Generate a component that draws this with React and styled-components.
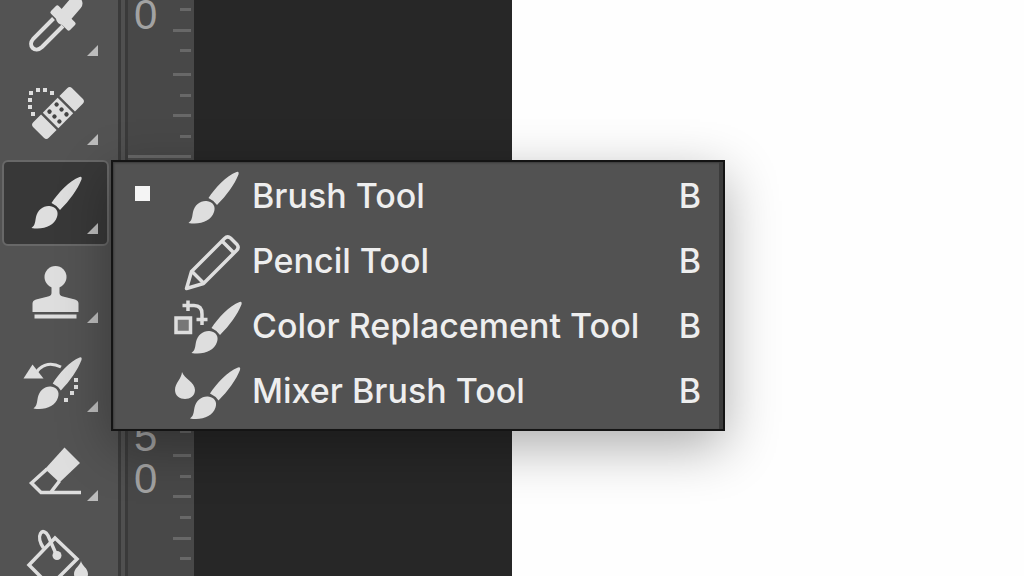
import React, {useState} from 'react';
import styled, {createGlobalStyle} from 'styled-components';

const GlobalStyle = createGlobalStyle`
    * {
        box-sizing: border-box;
    }
    body {
        margin: 0;
        background: #262626;
        font-family: Inter, "Liberation Sans", sans-serif;
    }
`;
const Workspace = styled.div`
    display: flex;
    height: 100vh;
    overflow: hidden;
`;
const Toolbar = styled.nav`
    flex: 0 0 118px;
    padding-left: 2px;
    background: #535353;
`;
/* the column is scrolled a little, so its first tool is cut by the window */
const ToolList = styled.div`
    display: flex;
    flex-direction: column;
    gap: 3px;
    margin-top: -18px;
`;
const ToolSlot = styled.div`
    position: relative;
    width: 107px;
`;
const ToolButton = styled.button`
    display: flex;
    align-items: center;
    justify-content: center;
    position: relative;
    width: 100%;
    height: 86px;
    padding: 0;
    border: 2px solid ${({$active}) => ($active ? '#686868' : 'transparent')};
    border-radius: 6px;
    background: ${({$active}) => ($active ? '#383838' : 'transparent')};
    color: #dedede;
    &::after {
        content: "";
        position: absolute;
        right: 9px;
        bottom: 10px;
        width: 11px;
        height: 11px;
        background: #bcbcbc;
        clip-path: polygon(100% 0, 100% 100%, 0 100%);
    }
`;
const ToolSvg = styled.svg`
    display: block;
    flex: none;
    width: 71px;
    height: 70px;
`;
const Divider = styled.div`
    flex: 0 0 10px;
    background: #505050;
    border-left: 3px solid #3a3a3a;
    border-right: 3px solid #3a3a3a;
`;
const Ruler = styled.div`
    flex: 0 0 66px;
    padding-right: 3px;
    background: #484848;
`;
const RulerTrack = styled.div`
    margin-top: -99px;
`;
const RulerSegment = styled.div`
    display: flex;
    justify-content: space-between;
    height: 254px;
    border-top: 3px solid #686868;
`;
const RulerLabel = styled.div`
    display: grid;
    grid-auto-rows: 42px;
    align-content: start;
    padding: ${({$skip}) => 4 + $skip * 43}px 0 0 6px;
    color: #a2a2a2;
    font-family: "Liberation Sans", Arial, sans-serif;
    font-size: 42px;
    line-height: 42px;
`;
const Digit = styled.div``;
const RulerTicks = styled.svg`
    display: block;
    width: 19px;
    height: 251px;
`;
const Pasteboard = styled.div`
    flex: 318 1 0;
    background: #272727;
`;
const Document = styled.main`
    flex: 512 1 0;
    background: #fefefe;
`;
const Flyout = styled.div`
    position: absolute;
    z-index: 2;
    top: 0;
    left: 109px;
    min-width: 614px;
    padding: 1px 0 6px;
    border: 2px solid #141414;
    background: #525252;
    box-shadow: inset -4px 0 0 #3b3b3b, inset 1px 1px 2px #3b3b3b,
        0 16px 50px rgb(0 0 0 / 32%);
`;
const FlyoutItem = styled.button`
    display: grid;
    grid-template-columns: 37px 72px 1fr auto;
    align-items: center;
    width: 100%;
    height: 65px;
    padding: 0 22px;
    border: 0;
    background: none;
    color: #eeeeee;
    font: 500 34px/44px Inter, "Liberation Sans", sans-serif;
    text-align: left;
    white-space: nowrap;
`;
const Marker = styled.span`
    width: 15px;
    height: 15px;
    margin-bottom: 4px;
    background: ${({$on}) => ($on ? '#f4f4f4' : 'transparent')};
`;
const FlyoutSvg = styled.svg`
    display: block;
    width: 72px;
    height: 65px;
    color: #dedede;
`;
const ItemLabel = styled.span`
    padding: 0 24px 0 8px;
`;
const Shortcut = styled.span``;

const BrushShape = ({transform}) => (
    <g transform={transform} fill="currentColor" stroke="none">
        <path d="M20 26.500C26 17 38 4 48 .5Q50.800-.5 50 3C46 13 38 24 28.500 33.500Q25.500 29 20 26.500Z" />
        <path d="M18 29.500C24.500 30 27.500 35 25.500 40.500C22.500 49.500 12 53.500 0 51.500C4 48.500 3.500 45 4.500 40.500C6 33.500 12 29 18 29.500Z" />
    </g>
);

const Dots = ({points}) => points.map(([x, y]) => (
    <rect key={`${x}-${y}`} x={x - 2} y={y - 2} width="4" height="4" fill="currentColor" />
));

const Eyedropper = () => (
    <ToolSvg viewBox="0 0 71 70" fill="none" stroke="currentColor">
        <path d="M33.500 28.500L13.500 48.500C7 56 15 63.500 22 57L43 36" strokeWidth="4" />
        <path d="M43 28L55.500 13.500" strokeWidth="14" strokeLinecap="round" />
        <rect x="-13.500" y="-5.500" width="27" height="11" rx="2" transform="translate(43 28) rotate(45)" fill="currentColor" stroke="none" />
    </ToolSvg>
);
const Healing = () => (
    <ToolSvg viewBox="0 0 71 70">
        <g transform="translate(38 34) rotate(-45)" fill="currentColor">
            <path d="M-13-11H-24Q-27.500-11-27.500-7.500V7.500Q-27.500 11-24 11H-13Z" />
            <rect x="-10.500" y="-11" width="21" height="22" />
            <path d="M13-11H24Q27.500-11 27.500-7.500V7.500Q27.500 11 24 11H13Z" />
            {[-5, 5].map(x => [-7, 0, 7].map(y => (
                <circle key={`${x}${y}`} cx={x} cy={y} r="2.200" fill="#444444" />
            )))}
        </g>
        <Dots points={[[32, 14], [25, 11], [18, 11], [11, 14], [10, 21], [10, 28], [13, 35]]} />
    </ToolSvg>
);
const Brush = () => (
    <ToolSvg viewBox="0 0 71 70"><BrushShape transform="translate(11.500 8.500)" /></ToolSvg>
);
const Stamp = () => (
    <ToolSvg viewBox="0 0 71 70" fill="currentColor">
        <circle cx="35.500" cy="20" r="11" />
        <path d="M31.500 27H39.500V36Q39.500 38.500 43 39.500L55 42.500Q58.500 43.500 58.500 46.500V55H12.500V46.500Q12.500 43.500 16 42.500L28 39.500Q31.500 38.500 31.500 36Z" />
        <rect x="14.500" y="57.500" width="42" height="4" />
    </ToolSvg>
);
const HistoryBrush = () => (
    <ToolSvg viewBox="0 0 71 70">
        <path d="M3.500 32.500L12.500 18.500L23.500 32.500Z" fill="currentColor" />
        <path d="M17 25.500C23 17.500 32 16.500 41 21" fill="none" stroke="currentColor" strokeWidth="3" />
        <BrushShape transform="translate(13.500 11) scale(.96 1)" />
        <Dots points={[[56, 34], [56, 41], [52, 47], [46, 54]]} />
    </ToolSvg>
);
const Eraser = () => (
    <ToolSvg viewBox="0 0 71 70" fill="none" stroke="currentColor" strokeWidth="3.500">
        <path d="M44.500 12.500L60 28L39.500 47.500L25 34Z" fill="currentColor" stroke="none" />
        <path d="M27 34L11.500 48L21 57.500H61M31 57L39.500 46" />
    </ToolSvg>
);
const Bucket = () => (
    <ToolSvg viewBox="0 0 71 70" fill="none" stroke="currentColor" strokeWidth="3.500">
        <path d="M35 14L57 35L30 62L9 41Z" />
        <path d="M23.500 24C20 19 18.500 13 20.500 9.500C22.500 6 26 8 28 11.500L36.500 31" />
        <circle cx="37" cy="31.500" r="4.500" fill="currentColor" stroke="none" />
        <path d="M61 37C62 42 68 44 68 50C68 59 54 59 54 50C54 44 60 42 61 37Z" fill="currentColor" stroke="none" />
    </ToolSvg>
);

const BrushItem = () => (
    <FlyoutSvg viewBox="0 0 72 65"><BrushShape transform="translate(16.500 8.500)" /></FlyoutSvg>
);
const PencilItem = () => (
    <FlyoutSvg viewBox="0 0 72 65" fill="none" stroke="currentColor" strokeWidth="3.500" strokeLinejoin="round">
        <path d="M14.500 60.500L19.500 43.500L52.500 10.500Q55.500 7.500 58.500 10L65 16.500Q67.500 19.500 64.500 22.500L31.500 55.500Z" />
        <path d="M20.500 44L31.500 55M50 13L61.500 24.500" />
    </FlyoutSvg>
);
const ReplaceItem = () => (
    <FlyoutSvg viewBox="0 0 72 65" fill="none" stroke="currentColor" strokeWidth="3.500">
        <rect x="4" y="25" width="14.500" height="14.500" fill="#777777" />
        <path d="M10.500 12.500H22Q30 12.500 30 21V32M16 7.500V18M24.500 26.500H35.500" />
        <BrushShape transform="translate(19.500 8.500)" />
    </FlyoutSvg>
);
const MixerItem = () => (
    <FlyoutSvg viewBox="0 0 72 65">
        <path d="M10 14C12 20.500 23 24 23 32C23 44 3 44 3 32C3 25 9.500 21 10 14Z" fill="currentColor" />
        <BrushShape transform="translate(18 9)" />
    </FlyoutSvg>
);

const tools = [
    {name: 'Eyedropper', Icon: Eyedropper},
    {name: 'Healing', Icon: Healing},
    {name: 'Brush', Icon: Brush},
    {name: 'Stamp', Icon: Stamp},
    {name: 'History Brush', Icon: HistoryBrush},
    {name: 'Eraser', Icon: Eraser},
    {name: 'Paint Bucket', Icon: Bucket},
];
const brushTools = [
    {name: 'Brush Tool', Icon: BrushItem},
    {name: 'Pencil Tool', Icon: PencilItem},
    {name: 'Color Replacement Tool', Icon: ReplaceItem},
    {name: 'Mixer Brush Tool', Icon: MixerItem},
];
const segments = [
    {digits: '0', skip: 2},
    {digits: '', skip: 0},
    {digits: '50', skip: 0},
];
const ticks = [21, 45, 66, 86, 107, 128, 148, 172, 193, 213, 234];

const BrushMenu = () => {
    const [current, setCurrent] = useState('Brush Tool');

    return (
        <Flyout role="menu">
            {brushTools.map(({name, Icon}) => (
                <FlyoutItem key={name} role="menuitemradio" aria-checked={current === name} onClick={() => setCurrent(name)}>
                    <Marker $on={current === name} />
                    <Icon />
                    <ItemLabel>{name}</ItemLabel>
                    <Shortcut>B</Shortcut>
                </FlyoutItem>
            ))}
        </Flyout>
    );
}

const App = () => {
    const [active, setActive] = useState('Brush');

    return (
        <Workspace>
            <GlobalStyle />
            <Toolbar>
                <ToolList>
                    {tools.map(({name, Icon}) => (
                        <ToolSlot key={name}>
                            <ToolButton aria-label={name} $active={active === name} onClick={() => setActive(name)}>
                                <Icon />
                            </ToolButton>
                            {name === 'Brush' && active === name && <BrushMenu />}
                        </ToolSlot>
                    ))}
                </ToolList>
            </Toolbar>
            <Divider />
            <Ruler>
                <RulerTrack>
                    {segments.map(({digits, skip}, i) => (
                        <RulerSegment key={i}>
                            <RulerLabel $skip={skip}>
                                {digits.split('').map((d, n) => <Digit key={n}>{d}</Digit>)}
                            </RulerLabel>
                            <RulerTicks viewBox="0 0 19 251">
                                {ticks.map((y, n) => (
                                    <rect key={y} x={n % 2 ? 1 : 8} y={y - 3} width={n % 2 ? 18 : 11} height="3" fill="#686868" />
                                ))}
                            </RulerTicks>
                        </RulerSegment>
                    ))}
                </RulerTrack>
            </Ruler>
            <Pasteboard />
            <Document />
        </Workspace>
    );
}

export default App;
